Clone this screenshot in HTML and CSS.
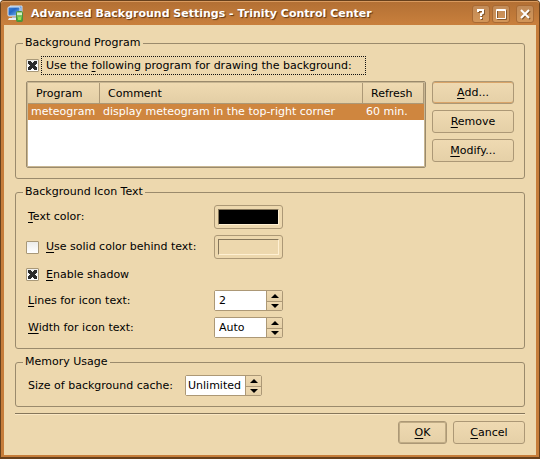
FILE: index.html
```html
<!DOCTYPE html>
<html lang="en">
<head>
<meta charset="utf-8">
<title>Advanced Background Settings - Trinity Control Center</title>
<link rel="stylesheet" href="styles.css">
</head>
<body>
<div class="window">
  <header class="titlebar">
    <svg class="app-icon" width="18" height="18" viewBox="0 0 18 18" aria-hidden="true">
      <defs>
        <linearGradient id="screen" x1="0" y1="0" x2="1" y2="1"><stop offset="0" stop-color="#3f82d8"/><stop offset=".4" stop-color="#2366c4"/><stop offset="1" stop-color="#8cc4f6"/></linearGradient>
        <linearGradient id="card" x1="0" y1="0" x2="0" y2="1"><stop offset="0" stop-color="#a9dd8a"/><stop offset="1" stop-color="#3f9a2c"/></linearGradient>
      </defs>
      <path d="M3 1h12v9H3z" fill="#5a93dc" stroke="#cfe0f2"/>
      <rect x="1" y="2" width="12" height="9" rx="1" fill="url(#screen)" stroke="#dfeaf6"/>
      <path d="M5 12h4v2H5z" fill="#aebccb"/>
      <path d="M2 13h8l1 2H1z" fill="#e9edf1"/>
      <rect x="9.500" y="6.500" width="6" height="10" rx="1" fill="url(#card)" stroke="#4c8f3c"/>
      <path d="M10 8h5v2h-5z" fill="#d7eec8"/>
      <path d="M11 12h3v3h-3z" fill="#8fe04e"/>
    </svg>
    <h1 class="title">Advanced Background Settings - Trinity Control Center</h1>
    <div class="window-buttons">
      <button type="button" class="window-button" aria-label="Help">
        <svg width="10" height="10" viewBox="0 0 10 10"><path class="glyph-shadow" d="M3 4V2h5v3L6 6v2M6 9v2"/><path class="glyph" d="M2 3V1h5v3L5 5v2M5 8v2"/></svg>
      </button>
      <button type="button" class="window-button" aria-label="Maximize">
        <svg width="10" height="10" viewBox="0 0 10 10"><path class="thin-shadow" d="M1.500 1.500h9v9h-9z"/><path class="thin" d="M.5 .5h9v9h-9z"/><path class="thin" d="M0 1.500h10"/></svg>
      </button>
      <button type="button" class="window-button window-button-close" aria-label="Close">
        <svg width="10" height="10" viewBox="0 0 10 10"><path class="glyph-shadow" d="M2 2l8 8M10 2L2 10"/><path class="glyph" d="M1 1l8 8M9 1L1 9"/></svg>
      </button>
    </div>
  </header>

  <main class="dialog">
    <fieldset class="group">
      <legend>Background Program</legend>
      <div class="check-row">
        <input type="checkbox" class="check" id="use-program" checked>
        <label class="focused-label" for="use-program">Use the <u>f</u>ollowing program for drawing the background:</label>
      </div>
      <div class="program-area">
        <div class="list">
          <table class="program-table">
            <colgroup><col class="col-program"><col><col class="col-refresh"></colgroup>
            <thead><tr><th scope="col">Program</th><th scope="col">Comment</th><th scope="col">Refresh</th></tr></thead>
            <tbody><tr class="selected"><td>meteogram</td><td>display meteogram in the top-right corner</td><td>60 min.</td></tr></tbody>
          </table>
        </div>
        <div class="program-buttons">
          <button type="button" class="button button-hover"><span><u>A</u>dd...</span></button>
          <button type="button" class="button"><span><u>R</u>emove</span></button>
          <button type="button" class="button"><span><u>M</u>odify...</span></button>
        </div>
      </div>
    </fieldset>

    <fieldset class="group">
      <legend>Background Icon Text</legend>
      <div class="form">
        <label class="form-label" for="text-color"><u>T</u>ext color:</label>
        <button type="button" class="button color-button" id="text-color" aria-label="Text color"><span class="swatch swatch-black"></span></button>

        <div class="check-row">
          <input type="checkbox" class="check" id="solid-color">
          <label class="check-label" for="solid-color"><u>U</u>se solid color behind text:</label>
        </div>
        <button type="button" class="button color-button color-button-disabled" aria-label="Background color" disabled><span class="swatch"></span></button>

        <div class="check-row form-wide">
          <input type="checkbox" class="check" id="shadow" checked>
          <label class="check-label" for="shadow"><u>E</u>nable shadow</label>
        </div>

        <label class="form-label" for="lines"><u>L</u>ines for icon text:</label>
        <div class="spin">
          <input type="text" class="spin-field" id="lines" value="2">
          <div class="spin-steps">
            <button type="button" class="step step-up" aria-label="More lines"></button>
            <button type="button" class="step step-down" aria-label="Fewer lines"></button>
          </div>
        </div>

        <label class="form-label" for="width"><u>W</u>idth for icon text:</label>
        <div class="spin">
          <input type="text" class="spin-field" id="width" value="Auto">
          <div class="spin-steps">
            <button type="button" class="step step-up" aria-label="Wider"></button>
            <button type="button" class="step step-down" aria-label="Narrower"></button>
          </div>
        </div>
      </div>
    </fieldset>

    <fieldset class="group">
      <legend>Memory Usage</legend>
      <div class="cache-row">
        <label class="form-label" for="cache">Size of background cache:</label>
        <div class="spin spin-cache">
          <input type="text" class="spin-field" id="cache" value="Unlimited">
          <div class="spin-steps">
            <button type="button" class="step step-up" aria-label="Larger cache"></button>
            <button type="button" class="step step-down" aria-label="Smaller cache"></button>
          </div>
        </div>
      </div>
    </fieldset>

    <hr class="separator">

    <div class="actions">
      <button type="button" class="button button-default"><span><u>O</u>K</span></button>
      <button type="button" class="button button-cancel"><span><u>C</u>ancel</span></button>
    </div>
  </main>
</div>
</body>
</html>
```
FILE: styles.css
```css
:root {
  --face: #edd8ae;
  --line: #9a8a6c;
  --button-line: #ac9876;
  --accent: #cf863f;
}

* { box-sizing: border-box; }

body {
  margin: 0;
  background: #fff;
  color: #000;
  font: 11px/14px "DejaVu Sans", Verdana, sans-serif;
}

button, input { font: inherit; color: inherit; }

u { text-underline-offset: 2px; text-decoration-thickness: 1px; text-decoration-skip-ink: none; }

.window {
  display: flex;
  flex-direction: column;
  min-height: 100vh;
  border: 1px solid #67401c;
  border-bottom-width: 2px;
  border-radius: 4px 4px 0 0;
  background: #c67d3a;
}

.titlebar {
  display: flex;
  align-items: center;
  gap: 6px;
  height: 24px;
  padding: 0 5px 0 6px;
  border-top: 1px solid #d99a5e;
  border-radius: 3px 3px 0 0;
  background: linear-gradient(#b37034, #c9803d);
}

.app-icon { flex: none; }

.title {
  flex: 1;
  margin: 0;
  color: #fff;
  font-size: 11px;
  font-weight: bold;
  white-space: nowrap;
  text-shadow: 1px 1px 1px #5c3512;
}

.window-buttons { display: flex; gap: 2px; }

.window-button {
  display: grid;
  place-items: center;
  width: 18px;
  height: 18px;
  padding: 0;
  border: 1px solid #a86a34;
  border-radius: 3px;
  background: linear-gradient(#c18b58, #d39658);
}

.window-button-close { margin-left: 4px; }
.window-button svg { overflow: visible; }
.glyph, .glyph-shadow { fill: none; stroke: #fff; stroke-width: 2; }
.thin, .thin-shadow { fill: none; stroke: #fff; }
.glyph-shadow, .thin-shadow { stroke: #85592d; }

.dialog {
  display: flex;
  flex: 1;
  flex-direction: column;
  gap: 6px;
  margin: 0 3px 2px;
  padding: 11px;
  background: var(--face);
}

.group {
  min-width: 0;
  margin: 0;
  padding: 6px 10px 10px;
  border: 1px solid var(--line);
  border-radius: 3px;
}

.group legend { margin-left: -3px; padding: 0 2px; }

.check-row { display: flex; align-items: center; gap: 2px; }

.check {
  appearance: none;
  flex: none;
  width: 13px;
  height: 13px;
  margin: 0;
  border: 1px solid #a89878;
  border-radius: 1px;
  background: linear-gradient(#ececea, #fff);
}

.check:checked {
  background:
    linear-gradient(45deg, transparent 38%, #2b2b2b 38% 62%, transparent 62%) center / 9px 9px no-repeat,
    linear-gradient(-45deg, transparent 38%, #2b2b2b 38% 62%, transparent 62%) center / 9px 9px no-repeat,
    linear-gradient(#ececea, #fff);
}

.focused-label { min-width: 325px; padding: 2px 4px 1px; border: 1px dotted #111; }
.check-label { padding-left: 5px; }

.program-area { display: flex; gap: 6px; margin-top: 6px; }

.list {
  flex: 1;
  min-height: 87px;
  border: 1px solid var(--line);
  border-radius: 2px;
  background: #fff;
  box-shadow: inset 0 0 0 1px #c8b692;
  padding: 1px;
}

.program-table { width: 100%; border-collapse: separate; border-spacing: 0; table-layout: fixed; }
.col-program { width: 72px; }
.col-refresh { width: 61px; }

.program-table th {
  height: 21px;
  padding: 1px 8px 0;
  border-right: 1px solid var(--button-line);
  border-bottom: 1px solid var(--button-line);
  background: linear-gradient(#efdab1, #e3cea5);
  font-weight: normal;
  text-align: left;
}

.program-table td { height: 16px; padding: 0 3px; white-space: nowrap; }
.selected { background: var(--accent); color: #fff; }

.program-buttons { display: flex; flex-direction: column; gap: 6px; width: 82px; }

.button {
  display: grid;
  place-items: center;
  height: 23px;
  padding: 0;
  border: 1px solid var(--button-line);
  border-radius: 3px;
  background: linear-gradient(#efdab2, #e5d0a7);
}

.button-hover { box-shadow: inset 0 1px #d9a468, inset 0 -1px #d9a468; }

.form {
  display: grid;
  grid-template-columns: 182px 69px;
  column-gap: 6px;
  row-gap: 6px;
  align-items: center;
}

.form-label { padding-left: 2px; }
.form-wide { grid-column: 1 / -1; height: 19px; }

.color-button { height: 24px; padding: 3px; background: var(--face); }
.swatch {
  width: 61px;
  height: 16px;
  border: 1px solid;
  border-color: #85765b #fff0d2 #fff0d2 #85765b;
}
.swatch-black { background: #000; }

.spin {
  display: flex;
  height: 21px;
  border: 1px solid var(--button-line);
  border-radius: 2px;
  background: #fff;
}

.spin-field {
  flex: 1;
  min-width: 0;
  padding: 1px 0 0 4px;
  border: 0;
  background: #fff;
}

.spin-steps { display: grid; grid-template-rows: 1fr 1fr; width: 16px; }

.step {
  display: grid;
  place-items: center;
  min-height: 0;
  padding: 0;
  border: 0;
  border-left: 1px solid var(--button-line);
  background: linear-gradient(#efdab2, #e5d0a7);
}

.step-down { border-top: 1px solid var(--button-line); }
.step::before { content: ""; border: 4px solid transparent; }
.step-up::before { border-top: 0; border-bottom-color: #000; }
.step-down::before { border-bottom: 0; border-top-color: #000; }

.cache-row { display: flex; align-items: center; gap: 12px; }
.spin-cache { width: 77px; }
.spin-cache .spin-field { padding-left: 2px; }

.separator {
  width: 100%;
  height: 2px;
  margin: 0;
  border: 0;
  border-top: 1px solid #85765b;
  border-bottom: 1px solid #fbe8c4;
}

.actions { display: flex; justify-content: flex-end; gap: 6px; }
.button-default { width: 49px; box-shadow: inset 0 0 0 1px #c0ac85; }
.button-cancel { width: 72px; }
```
